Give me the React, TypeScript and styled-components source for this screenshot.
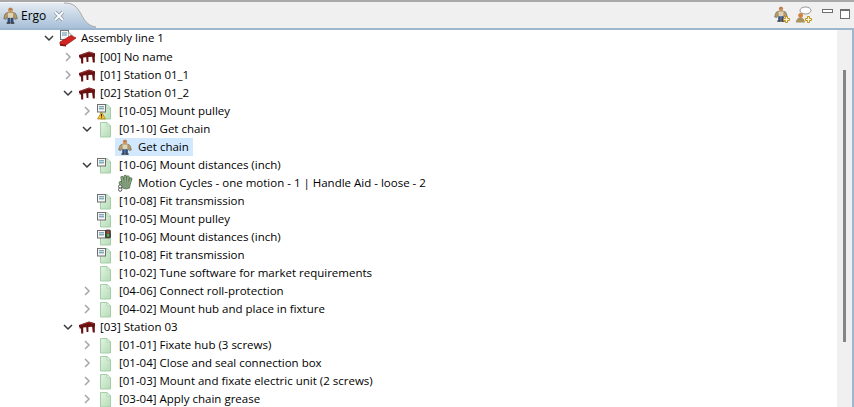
import React from "react";
import styled, { createGlobalStyle } from "styled-components";

const GlobalStyle = createGlobalStyle`
  html, body {
    margin: 0;
    padding: 0;
    background: #fff;
    overflow: hidden;
  }
`;

type IconKind = "page" | "pageDoc" | "pageWarn" | "pageLight" | "station" | "assembly" | "worker" | "hand";

interface NodeData {
  level: number;
  open?: boolean;
  leaf?: boolean;
  icon: IconKind;
  label: string;
  selected?: boolean;
}

const nodes: NodeData[] = [
  { level: 0, open: true, icon: "assembly", label: "Assembly line 1" },
  { level: 1, icon: "station", label: "[00] No name" },
  { level: 1, icon: "station", label: "[01] Station 01_1" },
  { level: 1, open: true, icon: "station", label: "[02] Station 01_2" },
  { level: 2, icon: "pageWarn", label: "[10-05] Mount pulley" },
  { level: 2, open: true, icon: "page", label: "[01-10] Get chain" },
  { level: 3, leaf: true, icon: "worker", label: "Get chain", selected: true },
  { level: 2, open: true, icon: "pageDoc", label: "[10-06] Mount distances (inch)" },
  { level: 3, leaf: true, icon: "hand", label: "Motion Cycles - one motion - 1 | Handle Aid - loose - 2" },
  { level: 2, leaf: true, icon: "pageDoc", label: "[10-08] Fit transmission" },
  { level: 2, leaf: true, icon: "pageDoc", label: "[10-05] Mount pulley" },
  { level: 2, leaf: true, icon: "pageLight", label: "[10-06] Mount distances (inch)" },
  { level: 2, leaf: true, icon: "pageDoc", label: "[10-08] Fit transmission" },
  { level: 2, leaf: true, icon: "page", label: "[10-02] Tune software for market requirements" },
  { level: 2, icon: "page", label: "[04-06] Connect roll-protection" },
  { level: 2, icon: "page", label: "[04-02] Mount hub and place in fixture" },
  { level: 1, open: true, icon: "station", label: "[03] Station 03" },
  { level: 2, icon: "page", label: "[01-01] Fixate hub (3 screws)" },
  { level: 2, icon: "page", label: "[01-04] Close and seal connection box" },
  { level: 2, icon: "page", label: "[01-03] Mount and fixate electric unit (2 screws)" },
  { level: 2, icon: "page", label: "[03-04] Apply chain grease" },
];

function WorkerGlyph() {
  return (
    <>
      <path d="M1.6 11 L2.6 7.4 Q3 5.6 5.4 5.2 H10.6 Q13 5.6 13.4 7.4 L14.4 11 L12.2 11.6 L11 9.4 H5 L3.8 11.6 Z" fill="#b09a6c" stroke="#6f6040" strokeWidth="0.6" />
      <rect x="5.6" y="5.4" width="4.8" height="5" fill="#ded3b4" />
      <ellipse cx="8" cy="3" rx="2.2" ry="2.5" fill="#d09460" />
      <path d="M5.8 2.6 Q8 -0.2 10.2 2.6 Z" fill="#a8703f" />
      <rect x="5.2" y="10.2" width="2.6" height="4.6" fill="#34507e" />
      <rect x="8.2" y="10.2" width="2.6" height="4.6" fill="#2f4874" />
      <rect x="4.4" y="14.4" width="3.4" height="1.4" fill="#333" />
      <rect x="8.2" y="14.4" width="3.4" height="1.4" fill="#333" />
    </>
  );
}

function WorkerIcon({ size = 16 }: { size?: number }) {
  return (
    <svg width={size} height={size} viewBox="0 0 16 16">
      <WorkerGlyph />
    </svg>
  );
}

function PlusBadge({ x, y }: { x: number; y: number }) {
  return (
    <path
      transform={`translate(${x} ${y})`}
      d="M2.5 0.5 H4.5 V2.5 H6.5 V4.5 H4.5 V6.5 H2.5 V4.5 H0.5 V2.5 H2.5 Z"
      fill="#fff6d8"
      stroke="#c4921a"
      strokeWidth="1"
    />
  );
}

function PageShape() {
  return (
    <>
      <defs>
        <linearGradient id="pageFill" x1="0" y1="0" x2="1" y2="1">
          <stop offset="0" stopColor="#e4f3e2" />
          <stop offset="1" stopColor="#b4dcb6" />
        </linearGradient>
      </defs>
      <path d="M3.5 1.5 H10 L13.5 5 V16 H3.5 Z" fill="url(#pageFill)" stroke="#a3cfa8" strokeWidth="1" />
      <path d="M10 1.5 V5 H13.5 Z" fill="#f4faf3" stroke="#a3cfa8" strokeWidth="0.8" />
    </>
  );
}

function DocBadge() {
  return (
    <>
      <rect x="0.5" y="1.5" width="8" height="7.5" fill="#f5f5f5" stroke="#6f6f6f" strokeWidth="1" />
      <path d="M2 3.8 H7 M2 5.8 H7" stroke="#4f8d9e" strokeWidth="1" />
    </>
  );
}

function TreeIcon({ kind }: { kind: IconKind }) {
  if (kind === "worker") return <WorkerIcon />;
  if (kind === "station") {
    return (
      <svg width="18" height="16" viewBox="0 0 18 16">
        <path d="M1 6 L11 2.6 L17 4.2 L17 7.4 L5 8.6 L1 8 Z" fill="#6d1010" />
        <path d="M1.6 7.4 H5.2 V14.6 H3.2 L3 9.6 H1.6 Z M8.2 7.6 H10.4 V13 H8.6 Z M14 6.8 H16.8 V13.6 H14.8 Z" fill="#651010" />
        <path d="M2.4 6 L11 3.3 L15.6 4.6" stroke="#a84040" strokeWidth="0.7" fill="none" />
      </svg>
    );
  }
  if (kind === "assembly") {
    return (
      <svg width="18" height="17" viewBox="0 0 18 17">
        <rect x="1.5" y="0.5" width="8" height="9" fill="#f3f6f8" stroke="#6d7478" />
        <path d="M3 3 H8 M3 5 H8" stroke="#5b97ab" />
        <path d="M9.5 2 L13.5 6 L9.5 9" fill="#eef3e8" stroke="#7b8a73" strokeWidth="0.8" />
        <path d="M1 12 L12 5.5 L17 8 L7 15 L1 14.5 Z" fill="#d6231f" stroke="#8c1412" strokeWidth="0.7" />
        <path d="M1 14 L7 15 L7 16.5 L1 15.8 Z" fill="#7d1412" />
      </svg>
    );
  }
  if (kind === "hand") {
    const fingers = "M6 8 L5 3.6 M8.2 8 L8.2 2.4 M10.4 8 L11 3 M12.4 9 L13.8 5 M5 12 L3.2 8.8";
    return (
      <svg width="17" height="18" viewBox="0 0 17 18">
        <path d={fingers} stroke="#56704f" strokeWidth="3.2" strokeLinecap="round" fill="none" />
        <path d="M4.6 8 H13.6 L12.6 14 Q9 16 5.4 14 Z" fill="#7f9b78" stroke="#56704f" strokeWidth="0.7" />
        <path d={fingers} stroke="#8ba683" strokeWidth="1.8" strokeLinecap="round" fill="none" />
        <circle cx="3.2" cy="12.6" r="1.7" fill="#fff" stroke="#555" strokeWidth="1" />
        <circle cx="3.2" cy="15.6" r="1.7" fill="#fff" stroke="#555" strokeWidth="1" />
      </svg>
    );
  }
  return (
    <svg width="16" height="17" viewBox="0 0 16 17">
      <PageShape />
      {kind !== "page" && <DocBadge />}
      {kind === "pageWarn" && (
        <>
          <path d="M4.5 9 L8.5 16 H0.5 Z" fill="#f2c12e" stroke="#a67c12" strokeWidth="0.7" />
          <path d="M4.5 11 V13.6 M4.5 14.4 V15.2" stroke="#3a2c00" strokeWidth="1" />
        </>
      )}
      {kind === "pageLight" && (
        <>
          <rect x="8.5" y="1" width="5" height="8" rx="1" fill="#4a4a42" stroke="#33332e" strokeWidth="0.7" />
          <rect x="10" y="2" width="2" height="2.4" fill="#d5362c" />
          <rect x="10" y="4.8" width="2" height="2.8" fill="#58b04a" />
        </>
      )}
    </svg>
  );
}

function Chevron({ open }: { open?: boolean }) {
  return (
    <svg width="10" height="10" viewBox="0 0 10 10">
      {open ? (
        <path d="M1 3 L5 7 L9 3" fill="none" stroke="#3a3a3a" strokeWidth="1.5" />
      ) : (
        <path d="M3 1 L7 5 L3 9" fill="none" stroke="#a6a6a6" strokeWidth="1.5" />
      )}
    </svg>
  );
}

export default function App() {
  return (
    <>
      <GlobalStyle />
      <Panel>
        <Header>
          <Tab>
            <TabIcon>
              <WorkerIcon size={17} />
            </TabIcon>
            <TabTitle>Ergo</TabTitle>
            <CloseIcon width="12" height="12" viewBox="0 0 12 12">
              <path d="M2 2 L10 10 M10 2 L2 10" stroke="#8a97a6" strokeWidth="3.4" />
              <path d="M2 2 L10 10 M10 2 L2 10" stroke="#fff" strokeWidth="1.8" />
            </CloseIcon>
          </Tab>
          <TabCurve width="32" height="28" viewBox="0 0 32 28" preserveAspectRatio="none">
            <defs>
              <linearGradient id="tabFill" x1="0" y1="0" x2="0" y2="1">
                <stop offset="0" stopColor="#e4ebf2" />
                <stop offset="1" stopColor="#a8c0d9" />
              </linearGradient>
            </defs>
            <path d="M0 3 C10 3 13 7 17 14 C21 22 25 26 32 27 V28 H0 Z" fill="url(#tabFill)" />
            <path d="M0 3 C10 3 13 7 17 14 C21 22 25 26 32 27" fill="none" stroke="#a9a9a9" strokeWidth="1" />
          </TabCurve>
          <Toolbar>
            <ToolButton>
              <svg width="18" height="18" viewBox="0 0 18 18">
                <WorkerGlyph />
                <PlusBadge x={10} y={10} />
              </svg>
            </ToolButton>
            <ToolButton>
              <svg width="18" height="18" viewBox="0 0 18 18">
                <ellipse cx="10.5" cy="4.5" rx="5.5" ry="3.5" fill="#fff" stroke="#777" strokeWidth="0.8" />
                <circle cx="5.6" cy="9.5" r="2.4" fill="#d4803a" />
                <path d="M0.8 16.5 Q1.5 11.5 5.5 11.5 Q9 11.5 10 16.5 Z" fill="#a8935e" />
                <PlusBadge x={10} y={10} />
              </svg>
            </ToolButton>
            <WindowButtons>
              <MinimizeBox />
              <MaximizeBox />
            </WindowButtons>
          </Toolbar>
        </Header>
        <Body>
          <Tree>
            {nodes.map((node, i) => (
              <Row key={i} $level={node.level} $first={i === 0}>
                <Twistie>{!node.leaf && <Chevron open={node.open} />}</Twistie>
                <Content $selected={node.selected} $leaf={node.level === 3}>
                  <IconSlot $leaf={node.level === 3}>
                    <TreeIcon kind={node.icon} />
                  </IconSlot>
                  <Label>{node.label}</Label>
                </Content>
              </Row>
            ))}
          </Tree>
          <ScrollTrack>
            <ScrollThumb />
          </ScrollTrack>
        </Body>
      </Panel>
    </>
  );
}

const Panel = styled.div`
  width: 854px;
  height: 407px;
  display: flex;
  flex-direction: column;
  overflow: hidden;
  background: #fff;
  font-family: "Open Sans", "Noto Sans", sans-serif;
  color: #000;
`;

const Header = styled.div`
  height: 26px;
  flex: none;
  display: flex;
  background: #f0f0f0;
  border-top: 2px solid #a9a9a9;
  border-bottom: 2px solid #9eb7cf;
  overflow: hidden;
`;

const Tab = styled.div`
  width: 64px;
  flex: none;
  padding-left: 2px;
  display: flex;
  align-items: center;
  background: linear-gradient(#e4ebf2, #a8c0d9);
  border-top: 1px solid #f6f8fa;
  box-sizing: border-box;
`;

const TabIcon = styled.span`
  display: flex;
  width: 19px;
  flex: none;
`;

const TabTitle = styled.span`
  font-size: 12px;
  width: 32px;
  flex: none;
`;

const CloseIcon = styled.svg`
  flex: none;
`;

const TabCurve = styled.svg`
  flex: none;
  margin-top: -2px;
`;

const Toolbar = styled.div`
  flex: 1;
  display: flex;
  align-items: center;
  justify-content: flex-end;
  gap: 4px;
  padding-right: 4px;
`;

const ToolButton = styled.span`
  display: flex;
  width: 18px;
  height: 18px;
`;

const WindowButtons = styled.div`
  display: flex;
  align-items: flex-start;
  gap: 7px;
  margin-left: 5px;
  align-self: flex-start;
  padding-top: 7px;
`;

const MinimizeBox = styled.span`
  width: 9px;
  height: 2px;
  border: 1px solid #6e6e6e;
  background: #fff;
`;

const MaximizeBox = styled.span`
  width: 8px;
  height: 7px;
  border: 1px solid #6e6e6e;
  border-top-width: 2px;
  background: #fff;
`;

const Body = styled.div`
  flex: 1;
  display: flex;
  min-height: 0;
  border-right: 2px solid #9eb7cf;
`;

const Tree = styled.div`
  flex: 1;
  min-width: 0;
  overflow: hidden;
`;

const Row = styled.div<{ $level: number; $first?: boolean }>`
  height: 18px;
  box-sizing: border-box;
  display: flex;
  align-items: center;
  padding-left: ${(p) => 40 + p.$level * 19}px;
  padding-bottom: ${(p) => (p.$first ? 2 : 0)}px;
`;

const Twistie = styled.span`
  width: 18px;
  flex: none;
  display: flex;
  justify-content: center;
`;

const Content = styled.div<{ $selected?: boolean; $leaf?: boolean }>`
  display: flex;
  align-items: center;
  height: 18px;
  margin-left: ${(p) => (p.$leaf ? 0 : 1)}px;
  padding-right: 4px;
  background: ${(p) => (p.$selected ? "#d1e8ff" : "transparent")};
`;

const IconSlot = styled.span<{ $leaf?: boolean }>`
  width: ${(p) => (p.$leaf ? 23 : 22)}px;
  padding-left: ${(p) => (p.$leaf ? 2 : 0)}px;
  box-sizing: border-box;
  flex: none;
  display: flex;
`;

const Label = styled.span`
  font-size: 11.5px;
  white-space: nowrap;
  line-height: 18px;
`;

const ScrollTrack = styled.div`
  width: 15px;
  flex: none;
  background: #f0f0f0;
  display: flex;
  justify-content: center;
  padding-top: 40px;
  box-sizing: border-box;
`;

const ScrollThumb = styled.div`
  width: 3px;
  height: 272px;
  background: #858585;
`;
